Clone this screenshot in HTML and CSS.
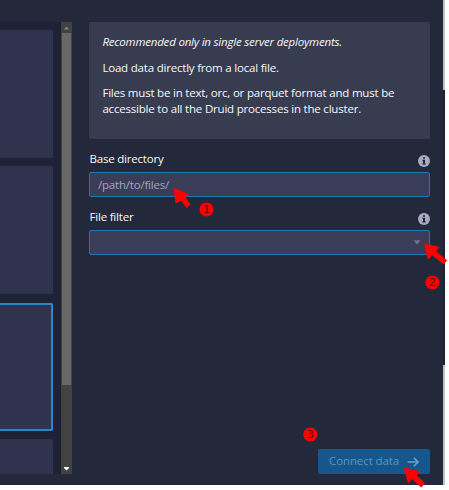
FILE: index.html
```
<!DOCTYPE html>
<html lang="en">
<head>
<meta charset="utf-8">
<title>Connect data</title>
<link rel="stylesheet" href="styles.css">
</head>
<body>
<div class="window">
  <main class="app">
    <section class="sources">
      <div class="cards">
        <div class="card"></div>
        <div class="card"></div>
        <div class="card selected"></div>
        <div class="card"></div>
      </div>
      <div class="scrollbar">
        <svg class="cap" viewBox="0 0 11 11"><path d="M3 7.5h5L5.5 4.5z" fill="#858585"/></svg>
        <div class="thumb"></div>
        <svg class="cap end" viewBox="0 0 11 11"><path d="M3 4h5v1L5.5 7.5 3 5z" fill="#fff"/></svg>
      </div>
    </section>
    <section class="settings">
      <div class="callout">
        <p><em>Recommended only in single server deployments.</em></p>
        <p>Load data directly from a local file.</p>
        <p>Files must be in text, orc, or parquet format and must be<br>accessible to all the Druid processes in the cluster.</p>
      </div>
      <div class="field">
        <div class="label"><span>Base directory</span>
          <svg class="info" viewBox="0 0 12 12"><circle cx="6" cy="6" r="6" fill="#a5abc0"/><path d="M5 2.2h2v1.6H5zM4.3 4.8H7v3.8h.8v.9H4.2v-.9H5V5.7h-.7z" fill="#24283b"/></svg>
        </div>
        <div class="input">/path/to/files/</div>
      </div>
      <div class="field">
        <div class="label"><span>File filter</span>
          <svg class="info" viewBox="0 0 12 12"><circle cx="6" cy="6" r="6" fill="#a5abc0"/><path d="M5 2.2h2v1.6H5zM4.3 4.8H7v3.8h.8v.9H4.2v-.9H5V5.7h-.7z" fill="#24283b"/></svg>
        </div>
        <div class="input select"><svg class="caret" viewBox="0 0 8 5"><path d="M.4.3h7.2L4 4.7z" fill="#6a708e"/></svg></div>
      </div>
      <div class="button"><span>Connect data</span>
        <svg class="arrow" viewBox="0 0 12 10"><path d="M.5 5h10.3M6.8.8 11 5 6.8 9.2" fill="none" stroke="#6d9fc6" stroke-width="1.6"/></svg>
      </div>
    </section>
  </main>
  <aside class="edge"><i class="light top"></i><i class="dark"></i><i class="light bottom"></i></aside>
</div>
<svg class="notes" viewBox="0 0 449 490">
  <g fill="#f00">
    <path d="M173.5 187.5 189 194.2 185.5 197.3 190.5 204.5 186.4 208 181.3 200.7 175.5 203.7z"/>
    <path d="M424 243.5 439.5 247 436.2 251.2 447 260.3 443.6 264.4 432.3 255.3 427.8 259.7z"/>
    <path d="M403.5 467 420 471.5 416.7 475.2 425 483 421.3 487.5 412.3 479.2 408 483.5z"/>
    <circle cx="206.5" cy="209.5" r="7"/>
    <circle cx="432.4" cy="282.5" r="7"/>
    <circle cx="310.3" cy="434.5" r="7"/>
  </g>
  <g class="digits">
    <text x="206.5" y="213.2">1</text>
    <text x="432.4" y="286.2">2</text>
    <text x="310.3" y="438.2">3</text>
  </g>
</svg>
</body>
</html>
```
FILE: styles.css
```
* { box-sizing: border-box; }
body { margin: 0; background: #fff; font-family: "Open Sans", "Noto Sans", sans-serif; font-size: 11.5px; letter-spacing: -0.2px; line-height: 16.5px; color: #f5f8fa; overflow: hidden; }
.window { display: flex; width: 445px; height: 485px; }
.app { display: flex; width: 443px; background: #24283b; padding: 22px 13px 11px 0; }
.sources { display: flex; width: 72px; height: 452px; background: #1f2134; }
.cards { width: 61px; padding: 8px 8px 0 0; display: flex; flex-direction: column; gap: 8.3px; overflow: hidden; }
.card { flex: none; height: 128px; background: #2f334d; border-radius: 0 2px 2px 0; }
.card.selected { border: solid #2a86cb; border-width: 2px 2px 2px 0; }
.scrollbar { width: 11px; background: #424242; display: flex; flex-direction: column; }
.cap { display: block; width: 11px; height: 11px; }
.thumb { height: 352px; margin: 0 1px; background: #686868; }
.end { margin-top: auto; }
.settings { margin-left: 17px; flex: 1; display: flex; flex-direction: column; }
.callout { height: 117px; padding: 12.4px 13.4px; background: #383c50; border-radius: 2px; white-space: nowrap; }
.callout p { margin: 0 0 8.7px; }
.field { height: 58px; }
.callout + .field { margin-top: 12px; }
.label { display: flex; justify-content: space-between; height: 20.5px; padding-left: 0.5px; }
.info { width: 12px; height: 12px; margin-top: 4px; }
.input { height: 25.5px; border: 1px solid #2075b6; border-radius: 2px; background: #3a3d57; color: #a2a7ba; padding: 0 8px; line-height: 24px; }
.select { display: flex; align-items: center; justify-content: flex-end; }
.caret { width: 8px; height: 5px; }
.button { margin-top: auto; align-self: flex-end; display: flex; align-items: center; justify-content: space-between; width: 112px; height: 25px; padding: 0 11px; border-radius: 2px; background: #15568c; color: #5e94bd; letter-spacing: -0.1px; white-space: nowrap; }
.arrow { width: 12px; height: 10px; }
.edge { width: 2px; display: flex; flex-direction: column; }
.light { background: #c2c1c4; }
.top { height: 90px; }
.dark { height: 275px; background: #1e2233; }
.bottom { flex: 1; }
.notes { position: absolute; left: 0; top: 0; width: 449px; height: 490px; }
.digits { font: 10.5px "DejaVu Sans", sans-serif; letter-spacing: 0; text-anchor: middle; fill: #4c080f; }
```
